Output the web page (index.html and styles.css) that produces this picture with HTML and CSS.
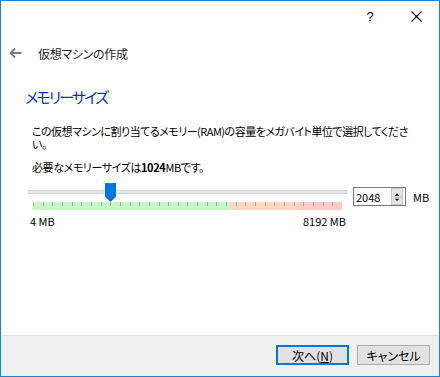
FILE: index.html
```html
<!DOCTYPE html>
<html lang="ja">
<head>
    <meta charset="UTF-8">
    <title>仮想マシンの作成</title>
    <link rel="stylesheet" href="styles.css">
</head>
<body>
<div class="window">
    <div class="titlebar">
        <span class="cap-btn help">?</span>
        <span class="cap-btn">
            <svg width="11" height="11" viewBox="0 0 11 11"><path d="M0.5 0.5 L10.5 10.5 M10.5 0.5 L0.5 10.5" stroke="#000" stroke-width="1.1" fill="none"/></svg>
        </span>
    </div>
    <div class="header">
        <svg class="back" width="13" height="12" viewBox="0 0 13 12"><path d="M12.5 6 H1.5 M6 1.5 L1.5 6 L6 10.5" stroke="#7a7a7a" stroke-width="1.8" fill="none"/></svg>
        <span class="header-title">仮想マシンの作成</span>
    </div>
    <div class="content">
        <h2 class="page-title">メモリーサイズ</h2>
        <p class="desc">この仮想マシンに割り当てるメモリー(RAM)の容量をメガバイト単位で選択してください。</p>
        <p class="desc need">必要なメモリーサイズは<b>1024</b>MBです。</p>
        <div class="mem-row">
            <div class="slider">
                <div class="track"><span class="handle"></span></div>
                <div class="scale"></div>
                <div class="scale-labels"><span>4 MB</span><span>8192 MB</span></div>
            </div>
            <div class="spin">
                <span class="spin-value">2048</span>
                <span class="spin-btns">
                    <svg width="11" height="16" viewBox="0 0 11 16">
                        <path d="M5.5 4 L8 6.5 H3 Z" fill="#000"/>
                        <path d="M1 8 H10" stroke="#b5b5b5" stroke-width="1"/>
                        <path d="M3 10 H8 L5.5 12.5 Z" fill="#000"/>
                    </svg>
                </span>
            </div>
            <span class="unit">MB</span>
        </div>
    </div>
    <div class="footer">
        <button class="btn default">次へ(<u>N</u>)</button>
        <button class="btn">キャンセル</button>
    </div>
</div>
</body>
</html>
```

FILE: styles.css
```css
* {
    box-sizing: border-box;
}
body {
    margin: 0;
    font-family: "Noto Sans CJK JP", sans-serif;
    font-size: 11px;
    color: #000;
    font-feature-settings: "palt";
}
.window {
    width: 440px;
    height: 377px;
    border: 1px solid #1883d7;
    background: #fff;
    display: flex;
    flex-direction: column;
}
.titlebar {
    height: 31px;
    display: flex;
    justify-content: flex-end;
}
.cap-btn {
    width: 46px;
    height: 31px;
    display: flex;
    align-items: center;
    justify-content: center;
}
.help {
    font-family: "Liberation Sans", sans-serif;
    font-size: 13px;
}
.header {
    height: 20px;
    margin-top: 11px;
    padding-left: 8px;
    display: flex;
    align-items: center;
}
.header-title {
    margin-left: 16px;
    font-size: 12px;
    letter-spacing: -0.3px;
    color: #222;
}
.content {
    flex: 1;
    padding-left: 24px;
}
.page-title {
    margin: 24px 0 0;
    font-size: 15px;
    line-height: 20px;
    letter-spacing: -1.8px;
    font-weight: normal;
    color: #0033bb;
}
.desc {
    margin: 18px 0 0;
    padding-left: 7px;
    padding-right: 22px;
    line-height: 13px;
    letter-spacing: -0.5px;
}
.need {
    margin-top: 10px;
    letter-spacing: -0.4px;
}
.mem-row {
    margin-top: 9px;
    display: flex;
    align-items: flex-start;
}
.slider {
    width: 322px;
    padding-left: 3px;
}
.track {
    position: relative;
    margin-top: 7px;
    height: 4px;
    background: #e7e7e7;
    border: 1px solid #d6d6d6;
}
.handle {
    position: absolute;
    left: 76px;
    top: -8px;
    width: 11px;
    height: 19px;
    background: #0078d7;
    clip-path: polygon(0 0, 100% 0, 100% 72%, 50% 100%, 0 72%);
}
.scale {
    margin: 8px 0 0 5px;
    width: 309px;
    height: 8px;
    background:
        repeating-linear-gradient(to right, #a3a3a3 0 1px, transparent 1px 9.656px) top left / 100% 4px no-repeat,
        linear-gradient(to right, #c6f7c6 0 197px, #ffd7c1 197px 266px, #ffc9c9 266px);
}
.scale-labels {
    margin-top: 5px;
    padding: 0 1px 0 2px;
    display: flex;
    justify-content: space-between;
    line-height: 12px;
}
.spin {
    margin: 4px 0 0 6px;
    width: 53px;
    height: 19px;
    border: 1px solid #7a7a7a;
    display: flex;
    align-items: center;
    justify-content: space-between;
    padding: 0 2px 0 2px;
}
.spin-btns {
    width: 12px;
    height: 17px;
    background: #e5e5e5;
    border: 1px solid #c9c9c9;
    display: flex;
}
.unit {
    margin: 6px 0 0 7px;
}
.footer {
    height: 41px;
    border-top: 1px solid #dfdfdf;
    background: #f0f0f0;
    display: flex;
    justify-content: flex-end;
    gap: 8px;
    padding: 9px 9px 0 0;
}
.btn {
    width: 73px;
    height: 20px;
    background: #e1e1e1;
    border: 1px solid #adadad;
    font-family: inherit;
    font-size: 12px;
    font-feature-settings: "palt";
    padding: 0;
    color: #000;
}
.btn.default {
    border: 2px solid #0078d7;
}
```
